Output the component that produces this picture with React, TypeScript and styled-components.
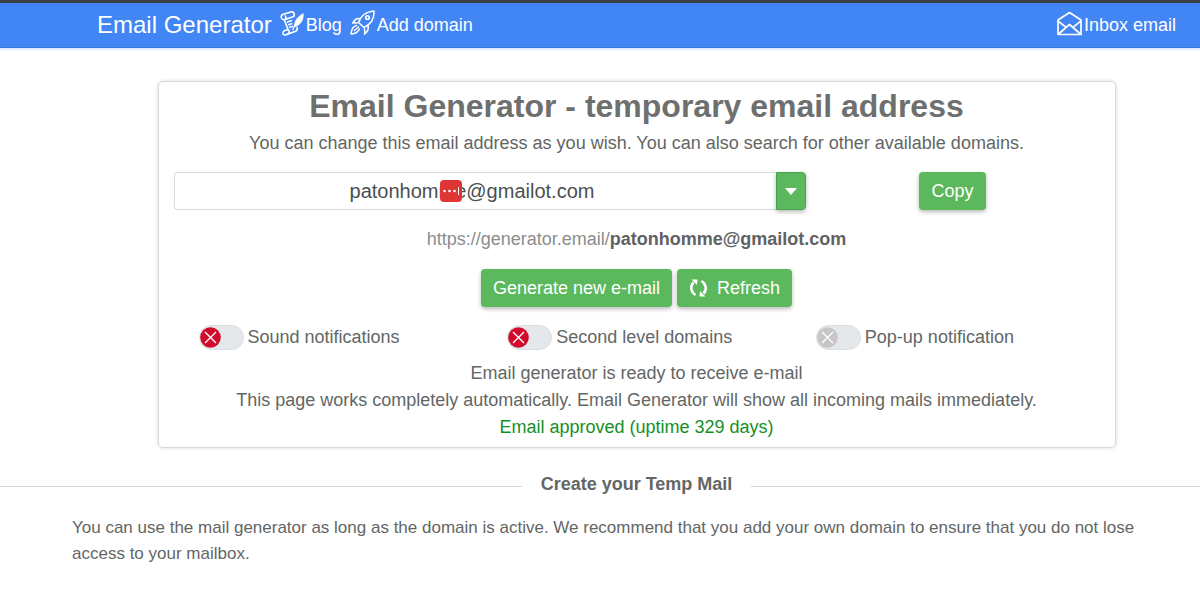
import React from "react";
import styled, { createGlobalStyle } from "styled-components";

const GlobalStyle = createGlobalStyle`
  *, *::before, *::after { box-sizing: border-box; }
  body {
    margin: 0;
    background: #fff;
    color: #636665;
    font: 18px/26px "Liberation Sans", Arial, sans-serif;
  }
  h1, h2, p { margin: 0; }
  button, input { font: inherit; }
`;

const Header = styled.header`
  display: flex;
  align-items: center;
  height: 48px;
  padding: 0 24px 0 97px;
  border-top: 3px solid #3a3f43;
  border-bottom: 1px solid #3b76d8;
  background: #4285f4;
  box-shadow: 0 1px 3px rgba(66, 133, 244, 0.3);
`;

const Brand = styled.a`
  margin-right: 8px;
  color: #fff;
  font-size: 24px;
  text-decoration: none;
`;

const NavLink = styled.a<{ $end?: boolean }>`
  display: flex;
  align-items: center;
  gap: 2px;
  margin-right: ${(p) => (p.$end ? 0 : "8px")};
  margin-left: ${(p) => (p.$end ? "auto" : 0)};
  color: #fff;
  text-decoration: none;

  svg {
    margin-bottom: 4px;
  }
`;

const Page = styled.main`
  padding-top: 33px;
`;

const CardArea = styled.div`
  padding-left: 73px;
`;

const Card = styled.section`
  display: flex;
  flex-direction: column;
  max-width: 958px;
  margin: 0 auto;
  padding: 5px 15px 6px;
  border: 1px solid #d9d9d9;
  border-radius: 5px;
  box-shadow: 0 0 4px rgba(0, 0, 0, 0.14);
  text-align: center;
`;

const Title = styled.h1`
  font-size: 32px;
  line-height: 38px;
  color: #6e706f;
`;

const Subtitle = styled.p`
  margin-top: 5px;
`;

const AddressRow = styled.form`
  display: flex;
  margin-top: 16px;
`;

const AddressGroup = styled.div`
  position: relative;
  display: flex;
  flex: 632;
  min-width: 0;
`;

const AddressInput = styled.input`
  flex: 1;
  min-width: 0;
  height: 38px;
  padding: 0 16px 0 10px;
  border: 1px solid #d8dadb;
  border-right: 0;
  border-radius: 4px 0 0 4px;
  color: #4b4f52;
  font-size: 20px;
  text-align: center;
`;

const AddressBadge = styled.span`
  position: absolute;
  top: 8px;
  left: calc(50% - 50px);
  display: flex;
  width: 22px;
  height: 22px;
  border-radius: 4px;
  background: #dd3634;
`;

const CopyCell = styled.div`
  display: flex;
  flex: 294;
  justify-content: center;
`;

const Button = styled.button<{ $joined?: boolean }>`
  display: flex;
  align-items: center;
  justify-content: center;
  gap: 9px;
  height: 38px;
  padding: 0 ${(p) => (p.$joined ? "8px" : "12px")};
  border: ${(p) => (p.$joined ? "1px solid #48a34b" : "0")};
  border-radius: ${(p) => (p.$joined ? "0 4px 4px 0" : "4px")};
  background: #5cb85c;
  box-shadow: 0 2px 4px rgba(0, 0, 0, 0.28);
  color: #fff;
  white-space: nowrap;
`;

const Permalink = styled.a`
  margin-top: 16px;
  color: #8b8d8d;
  text-decoration: none;

  strong {
    color: #5f6262;
  }
`;

const Actions = styled.div`
  display: flex;
  justify-content: center;
  gap: 5px;
  margin-top: 17px;
`;

const Toggles = styled.div`
  display: grid;
  grid-template-columns: repeat(3, 1fr);
  margin-top: 17px;
`;

const Toggle = styled.label`
  display: flex;
  align-items: center;
  gap: 4px;
  padding-left: 25px;
  text-align: left;
`;

const Track = styled.span<{ $disabled?: boolean }>`
  position: relative;
  display: flex;
  align-items: center;
  width: 45px;
  height: 25px;
  border: 1px solid #dcdfe1;
  border-radius: 13px;
  background: #e4e8ea;

  circle {
    fill: ${(p) => (p.$disabled ? "#c8c5c7" : "#cf0a2c")};
  }

  input {
    position: absolute;
    inset: 0;
    width: 100%;
    height: 100%;
    margin: 0;
    opacity: 0;
  }
`;

const StatusList = styled.div`
  margin-top: 10px;
`;

const Status = styled.p<{ $approved?: boolean }>`
  line-height: 27px;
  color: ${(p) => (p.$approved ? "#15901f" : "inherit")};
`;

const Divider = styled.div`
  display: flex;
  align-items: center;
  gap: 19px;
  margin-top: 23px;
`;

const Rule = styled.span<{ $basis: number }>`
  flex: 1 0 ${(p) => p.$basis}px;
  height: 1px;
  margin-top: 4px;
  background: #d5d5d5;
`;

const SectionTitle = styled.h2`
  font-size: 18px;
  line-height: 26px;
`;

const Intro = styled.p`
  margin-top: 18px;
  padding: 0 20px 0 72px;
  font-size: 17px;
`;

const ScrollIcon = () => (
  <svg width="24" height="25" viewBox="0 0 24 25" fill="none" stroke="#fff" strokeWidth="1.6" strokeLinecap="round" strokeLinejoin="round" aria-hidden="true">
    <path d="M4.200 8.800C1 8.500 .2 5 2.600 3.500L11 1c2.200-.5 3.600 1 3.200 3" />
    <path d="M4.200 8.800c2-.6 2.200-2.400 1.200-3.800M4.200 8.800L13 5.800c1.200-.5 1.500-1 1.200-1.800" />
    <path d="M4.500 9.200L8 18.500l-4.200 1.600c-1.800 1-1 4.100 1.400 3.900L15 20.500c2-.8 2.600-2.500 2-4.300" />
    <path d="M8 18.500c1.600.8 1.600 3.500-.4 4.800" />
    <path d="M7.500 11l4-1.400M8.700 13.700l3-1M9.800 16.200l2.400-.8" />
    <path d="M14.500 15.800c-.8-4.800 2.500-9.800 8.700-13.300.3 3.500-.3 7-2.800 9.700-1.500 1.700-3.500 2.800-5.900 3.600z" fill="#fff" strokeWidth=".6" />
    <path d="M12.800 19c.7-3 2-5.500 4-8" strokeWidth="1.200" />
  </svg>
);

const RocketIcon = () => (
  <svg width="25" height="26" viewBox="0 0 25 26" fill="none" stroke="#fff" strokeWidth="1.6" strokeLinecap="round" strokeLinejoin="round" aria-hidden="true">
    <path d="M8.500 12.500C10.500 6.500 16 1.500 24 1c.4 7.500-3.500 13.500-10 16.500z" />
    <circle cx="17.500" cy="7.500" r="1.800" />
    <path d="M9.500 8.500C6 8.300 4 10.300 2.800 13c1.700-.5 3-.4 4.200 0M18 15.500c.8 3.500-.5 6.500-3.500 8.500.5-1.800.4-3.500 0-5" />
    <path d="M6.500 15.500c-3 .5-5 3.500-5.500 8.500 4.500-.3 7.300-2 8.300-5M4.500 20.500l4-3.500" />
  </svg>
);

const OpenMailIcon = () => (
  <svg width="25" height="25" viewBox="0 0 25 25" fill="none" stroke="#fff" strokeWidth="1.7" strokeLinejoin="round" aria-hidden="true">
    <path d="M1 9L12.500 1.500 24 9v14.500H1z" />
    <path d="M1 10l7.500 5.800M24 10l-7.500 5.800M1.500 23l11-9.500 11 9.500" />
  </svg>
);

const RefreshIcon = () => (
  <svg width="19" height="20" viewBox="0 0 19 20" fill="none" stroke="#fff" strokeWidth="2.600" aria-hidden="true">
    <path d="M6.500 17C1.500 14 1 8 4.500 4.500" />
    <path d="M12.500 3c5 3 5.500 9 2 12.500" />
    <path d="M2.500 1.500L8.500 1.500l-.5 5.500zM16.500 18.500L10.500 18.500l.5-5.500z" fill="#fff" stroke="none" />
  </svg>
);

const CrossKnob = () => (
  <svg width="21" height="21" viewBox="0 0 21 21" aria-hidden="true">
    <circle cx="10.500" cy="10.500" r="10.300" />
    <path d="M5 5l11 11M16 5L5 16" stroke="#fff" strokeWidth="1.400" />
  </svg>
);

const toggles = [
  { label: "Sound notifications" },
  { label: "Second level domains" },
  { label: "Pop-up notification", disabled: true },
];

export default function App() {
  return (
    <>
      <GlobalStyle />
      <Header>
        <Brand href="#">Email Generator</Brand>
        <NavLink href="#blog">
          <ScrollIcon />
          Blog
        </NavLink>
        <NavLink href="#domain">
          <RocketIcon />
          Add domain
        </NavLink>
        <NavLink href="#inbox" $end>
          <OpenMailIcon />
          Inbox email
        </NavLink>
      </Header>
      <Page>
        <CardArea>
          <Card>
            <Title>Email Generator - temporary email address</Title>
            <Subtitle>
              You can change this email address as you wish. You can also search for other available domains.
            </Subtitle>
            <AddressRow onSubmit={(e) => e.preventDefault()}>
              <AddressGroup>
                <AddressInput aria-label="Email address" defaultValue="patonhomme@gmailot.com" />
                <AddressBadge>
                  <svg width="22" height="22" viewBox="0 0 22 22" fill="#fff" aria-hidden="true">
                    <circle cx="4.500" cy="11" r="1.300" />
                    <circle cx="9.500" cy="11" r="1.300" />
                    <circle cx="14.500" cy="11" r="1.300" />
                    <path d="M18 7h1v8h-1z" />
                  </svg>
                </AddressBadge>
                <Button type="button" $joined aria-label="Show domains">
                  <svg width="12" height="7" viewBox="0 0 12 7" fill="#fff" aria-hidden="true">
                    <path d="M0 0h12L6 7z" />
                  </svg>
                </Button>
              </AddressGroup>
              <CopyCell>
                <Button type="button">Copy</Button>
              </CopyCell>
            </AddressRow>
            <Permalink href="#mailbox">
              https://generator.email/<strong>patonhomme@gmailot.com</strong>
            </Permalink>
            <Actions>
              <Button type="button">Generate new e-mail</Button>
              <Button type="button">
                <RefreshIcon />
                Refresh
              </Button>
            </Actions>
            <Toggles>
              {toggles.map((t) => (
                <Toggle key={t.label}>
                  <Track $disabled={t.disabled}>
                    <CrossKnob />
                    <input type="checkbox" disabled={t.disabled} />
                  </Track>
                  {t.label}
                </Toggle>
              ))}
            </Toggles>
            <StatusList>
              <Status>Email generator is ready to receive e-mail</Status>
              <Status>
                This page works completely automatically. Email Generator will show all incoming mails immediately.
              </Status>
              <Status $approved>Email approved (uptime 329 days)</Status>
            </StatusList>
          </Card>
        </CardArea>
        <Divider>
          <Rule $basis={73} />
          <SectionTitle>Create your Temp Mail</SectionTitle>
          <Rule $basis={0} />
        </Divider>
        <Intro>
          You can use the mail generator as long as the domain is active. We recommend that you add your own domain to
          ensure that you do not lose access to your mailbox.
        </Intro>
      </Page>
    </>
  );
}
